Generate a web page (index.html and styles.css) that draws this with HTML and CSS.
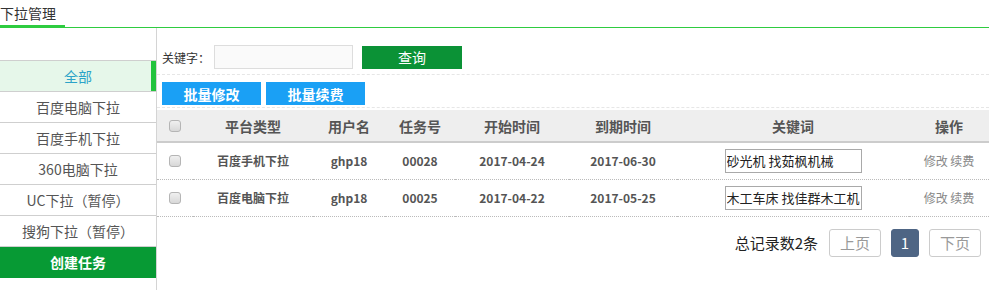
FILE: index.html
```html
<!DOCTYPE html>
<html lang="zh-CN">
<head>
	<meta charset="UTF-8">
	<title>下拉管理</title>
	<link rel="stylesheet" href="styles.css">
</head>
<body>
	<div class="tabbar">
		<span class="tab">下拉管理</span>
	</div>
	<div class="wrap">
		<ul class="side">
			<li class="on">全部</li>
			<li>百度电脑下拉</li>
			<li>百度手机下拉</li>
			<li>360电脑下拉</li>
			<li>UC下拉（暂停）</li>
			<li>搜狗下拉（暂停）</li>
			<li class="create">创建任务</li>
		</ul>
		<div class="main">
			<div class="search">
				<label>关键字：</label>
				<input type="text" class="kw">
				<button class="btn-query">查询</button>
			</div>
			<div class="batch">
				<button class="btn-blue">批量修改</button>
				<button class="btn-blue">批量续费</button>
			</div>
			<table class="list">
				<colgroup>
					<col style="width:36px">
					<col style="width:120px">
					<col style="width:72px">
					<col style="width:70px">
					<col style="width:114px">
					<col style="width:108px">
					<col style="width:232px">
					<col style="width:80px">
				</colgroup>
				<thead>
					<tr>
						<th><span class="chk"></span></th>
						<th>平台类型</th>
						<th>用户名</th>
						<th>任务号</th>
						<th>开始时间</th>
						<th>到期时间</th>
						<th>关键词</th>
						<th>操作</th>
					</tr>
				</thead>
				<tbody>
					<tr>
						<td><span class="chk"></span></td>
						<td>百度手机下拉</td>
						<td>ghp18</td>
						<td>00028</td>
						<td>2017-04-24</td>
						<td>2017-06-30</td>
						<td><input type="text" class="word" value="砂光机 找茹枫机械"></td>
						<td class="op"><a>修改</a> <a>续费</a></td>
					</tr>
					<tr>
						<td><span class="chk"></span></td>
						<td>百度电脑下拉</td>
						<td>ghp18</td>
						<td>00025</td>
						<td>2017-04-22</td>
						<td>2017-05-25</td>
						<td><input type="text" class="word" value="木工车床 找佳群木工机"></td>
						<td class="op"><a>修改</a> <a>续费</a></td>
					</tr>
				</tbody>
			</table>
			<div class="pager">
				<span class="total">总记录数2条</span>
				<a class="pg">上页</a>
				<a class="pg cur">1</a>
				<a class="pg">下页</a>
			</div>
		</div>
	</div>
</body>
</html>
```

FILE: styles.css
```css
*{margin: 0;padding: 0;box-sizing: border-box;}
body{background: #fff;font-family: "Noto Sans CJK SC", "Noto Sans", sans-serif;color: #555;overflow: hidden;}
li{list-style: none;}
a{cursor: pointer;}

.tabbar{display: flex;align-items: flex-end;height: 28px;border-bottom: 1px solid #2ecc40;}
.tab{
	height: 27px;
	width: 65px;
	padding-top: 3px;
	font-size: 14px;
	line-height: 18px;
	color: #333;
	border-bottom: 3px solid #2ecc40;
	margin-bottom: -1px;
}

.wrap{display: flex;height: 262px;}
.side{width: 157px;border-right: 1px solid #d4d4d4;padding-top: 32px;}
.side li{
	height: 31px;
	line-height: 30px;
	border-bottom: 1px solid #cfcfcf;
	text-align: center;
	font-size: 14px;
	color: #555;
}
.side li.on{border-top: 1px solid #cfcfcf;background: #e6f7ea;color: #2ba3c8;box-shadow: inset -5px 0 0 #22c33d;height: 32px;}
.side li.create{background: #079a34;color: #fff;font-weight: bold;border-bottom: 0;}

.main{flex: 1;padding-top: 17px;}
.search{display: flex;align-items: center;padding-left: 5px;height: 24px;font-size: 12px;color: #333;}
.search label{margin-right: 4px;}
.kw{width: 139px;height: 24px;border: 1px solid #ddd;background: #fafafa;outline: none;}
.btn-query{
	width: 100px;height: 23px;margin-left: 9px;
	border: 0;background: #0b9236;color: #fff;
	font-family: inherit;font-size: 14px;
}
.batch{
	margin-top: 5px;
	border-top: 1px dashed #e6e6e6;
	border-bottom: 1px dashed #e6e6e6;
	padding: 7px 0 2px 5px;
	display: flex;
	gap: 5px;
}
.btn-blue{
	width: 99px;height: 23px;
	border: 0;background: #1aa0f5;color: #fff;
	font-family: inherit;font-size: 14px;font-weight: bold;
}

.list{width: 832px;table-layout: fixed;border-collapse: collapse;margin-top: 2px;}
.list th{
	height: 32px;
	background: #eee;
	border-bottom: 2px solid #ccc;
	font-size: 14px;
	font-weight: bold;
	color: #555;
	text-align: center;
}
.list td{
	height: 37px;
	border-bottom: 1px dotted #bbb;
	font-size: 12px;
	font-weight: bold;
	color: #555;
	text-align: center;
}
.chk{
	display: inline-block;
	width: 12px;height: 12px;
	border: 1px solid #b5b5b5;
	border-radius: 3px;
	background: linear-gradient(#f0f0f0, #d8d8d8);
	vertical-align: middle;
	margin-top: -3px;
}
.word{
	width: 137px;height: 24px;
	border: 1px solid #a9a9a9;
	padding: 0 1px;
	font-family: inherit;
	font-size: 13px;
	color: #222;
	outline: none;
}
.op{font-weight: normal !important;color: #888 !important;}

.pager{display: flex;justify-content: flex-end;align-items: center;padding: 12px 8px 0 0;font-size: 15px;}
.total{color: #222;margin-right: 11px;}
.pg{
	display: inline-block;
	width: 52px;height: 28px;line-height: 26px;
	border: 1px solid #ccc;border-radius: 3px;
	text-align: center;color: #999;
	margin-left: 10px;
}
.pg:first-of-type{margin-left: 0;}
.pg.cur{width: 28px;background: #4e6584;border-color: #4e6584;color: #fff;}
```
